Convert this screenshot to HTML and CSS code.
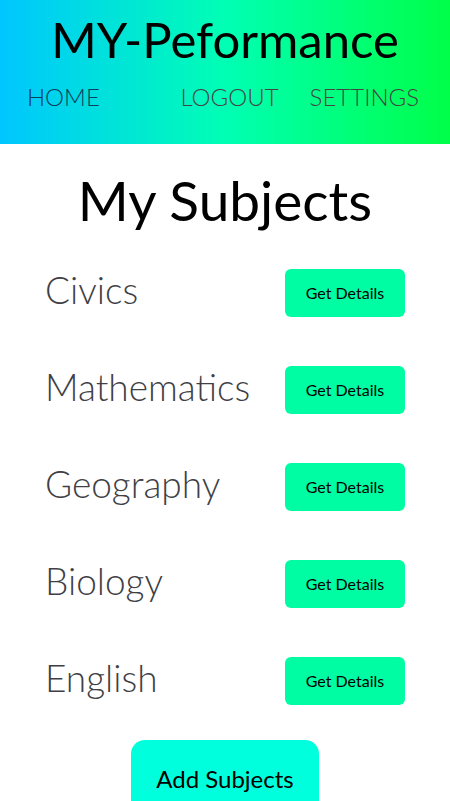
FILE: index.html
```html
<!DOCTYPE html>
<html lang="en">
<head>
<meta charset="utf-8">
<title>MY-Peformance</title>
<link rel="stylesheet" href="styles.css">
</head>
<body>
<header class="top">
  <h1 class="brand">MY-Peformance</h1>
  <nav class="nav">
    <a class="nav-link nav-home" href="#">HOME</a>
    <a class="nav-link" href="#">LOGOUT</a>
    <a class="nav-link" href="#">SETTINGS</a>
  </nav>
</header>
<main class="content">
  <h2 class="title">My Subjects</h2>
  <ul class="subjects">
    <li class="subject"><span class="subject-name">Civics</span><button class="details">Get Details</button></li>
    <li class="subject"><span class="subject-name">Mathematics</span><button class="details">Get Details</button></li>
    <li class="subject"><span class="subject-name">Geography</span><button class="details">Get Details</button></li>
    <li class="subject"><span class="subject-name">Biology</span><button class="details">Get Details</button></li>
    <li class="subject"><span class="subject-name">English</span><button class="details">Get Details</button></li>
  </ul>
  <div class="add-wrap"><button class="add">Add Subjects</button></div>
</main>
</body>
</html>
```

FILE: styles.css
```css
* { box-sizing: border-box; }
html, body { margin: 0; padding: 0; }
body {
  font-family: "Lato", "Liberation Sans", sans-serif;
  background: #ffffff;
  color: #000;
  overflow: hidden;
}
.top {
  height: 144px;
  background: linear-gradient(to right, #00c6ff 0%, #00ffb4 50%, #00ff48 100%);
  padding-top: 11px;
}
.brand {
  margin: 0;
  text-align: center;
  font-size: 49px;
  line-height: 56px;
  font-weight: 400;
  color: #000;
}
.nav {
  display: flex;
  align-items: baseline;
  gap: 31px;
  padding: 0 31px 0 27px;
  margin-top: 15px;
}
.nav-link {
  font-size: 24px;
  line-height: 30px;
  font-weight: 300;
  color: #444;
  text-decoration: none;
}
.nav-home {
  margin-right: auto;
  color: #0b3f5c;
}
.content { padding: 0; }
.title {
  margin: 24px 0 0;
  text-align: center;
  font-size: 55px;
  line-height: 64px;
  font-weight: 400;
}
.subjects {
  list-style: none;
  margin: 12px 0 0;
  padding: 0 45px;
}
.subject {
  display: flex;
  align-items: center;
  justify-content: space-between;
  height: 97px;
}
.subject-name {
  font-size: 37px;
  font-weight: 300;
  color: #3f3f46;
  padding-bottom: 6px;
}
.details {
  width: 120px;
  height: 48px;
  border: 0;
  border-radius: 6px;
  background: #00fca3;
  font-family: inherit;
  font-size: 16px;
  color: #000;
}
.add-wrap {
  display: flex;
  justify-content: center;
  margin-top: 11px;
}
.add {
  width: 188px;
  height: 76px;
  border: 0;
  border-radius: 14px;
  background: #00ffdd;
  font-family: inherit;
  font-size: 24px;
  color: #000;
}
```
